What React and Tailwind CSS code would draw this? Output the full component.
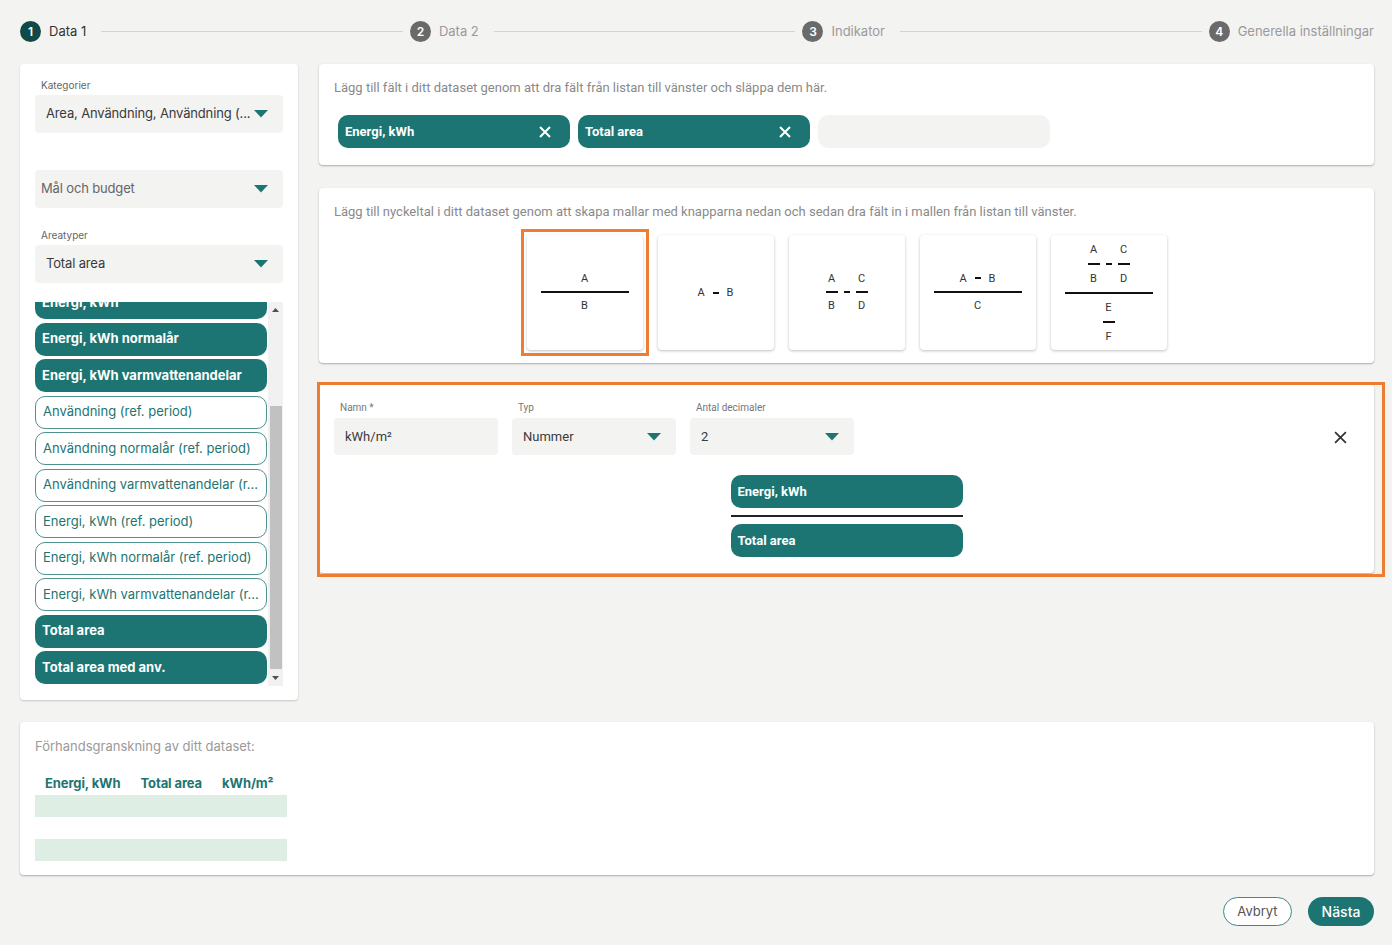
import React from 'react';

const TEAL = '#1c7572';

// Small filled caret used in the select boxes
function Caret() {
  return (
    <svg width="14" height="8" viewBox="0 0 14 8" className="shrink-0">
      <polygon points="0,0 14,0 7,7.5" fill={TEAL} />
    </svg>
  );
}

function Cross({ color = '#fff', size = 12, width = 2 }) {
  return (
    <svg width={size} height={size} viewBox="0 0 12 12" className="shrink-0">
      <path d="M1 1 L11 11 M11 1 L1 11" stroke={color} strokeWidth={width} strokeLinecap="butt" />
    </svg>
  );
}

function Step({ n, label, active }) {
  return (
    <div className="flex items-center gap-2 shrink-0">
      <div
        className={`w-[21px] h-[21px] rounded-full flex items-center justify-center text-white text-[12px] font-semibold ${
          active ? 'bg-[#0f4a47]' : 'bg-[#6a6a6a]'
        }`}
      >
        {n}
      </div>
      <span className={`text-[13px] ${active ? 'text-[#333]' : 'text-[#9a9a9a]'}`}>{label}</span>
    </div>
  );
}

function Select({ value, muted }) {
  return (
    <div
      className={`h-[38px] rounded-[4px] bg-[#f3f3f2] flex items-center justify-between gap-[4px] pr-[15px] ${
        muted ? 'pl-[6px]' : 'pl-[11px]'
      }`}
    >
      <span className={`text-[13px] tracking-[-0.15px] whitespace-nowrap overflow-hidden ${muted ? 'text-[#666]' : 'text-[#3a3a3a]'}`}>
        {value}
      </span>
      <Caret />
    </div>
  );
}

const FIELDS = [
  { label: 'Energi, kWh', filled: true },
  { label: 'Energi, kWh normalår', filled: true },
  { label: 'Energi, kWh varmvattenandelar', filled: true },
  { label: 'Användning (ref. period)' },
  { label: 'Användning normalår (ref. period)' },
  { label: 'Användning varmvattenandelar (r...' },
  { label: 'Energi, kWh (ref. period)' },
  { label: 'Energi, kWh normalår (ref. period)' },
  { label: 'Energi, kWh varmvattenandelar (r...' },
  { label: 'Total area', filled: true },
  { label: 'Total area med anv.', filled: true },
];

function FieldItem({ label, filled }) {
  return filled ? (
    <div className="h-[33px] shrink-0 rounded-[10px] bg-[#1c7572] text-white font-bold text-[13px] flex items-center px-[7px] whitespace-nowrap overflow-hidden">
      {label}
    </div>
  ) : (
    <div className="h-[33px] shrink-0 rounded-[10px] bg-white border-[1.5px] border-[#4f918e] text-[#1c7572] text-[13px] flex items-center px-[7px] whitespace-nowrap overflow-hidden">
      {label}
    </div>
  );
}

function Chip({ label, removable }) {
  return (
    <div className="w-[232px] h-[33px] rounded-[10px] bg-[#1c7572] flex items-center justify-between pl-[7px] pr-[19px] font-['Roboto',sans-serif] font-bold text-[13px] text-white">
      <span>{label}</span>
      {removable && <Cross size={12} width={2} />}
    </div>
  );
}

function Letter({ children }) {
  return <span className="text-[11px] leading-none text-[#333] w-[11px] text-center">{children}</span>;
}

function Bar({ w }) {
  return <div className="h-[2px] bg-[#111]" style={{ width: w }} />;
}

function Minus() {
  return <div className="w-[6px] h-[2px] bg-[#111]" />;
}

function SmallFrac({ top, bottom }) {
  return (
    <div className="flex flex-col items-center gap-[7px]">
      <Letter>{top}</Letter>
      <Bar w={12} />
      <Letter>{bottom}</Letter>
    </div>
  );
}

function TemplateCard({ children }) {
  return (
    <div className="w-[116px] h-[115px] bg-white rounded-[4px] shadow-[0_1px_3px_rgba(0,0,0,0.25)] flex items-center justify-center">
      {children}
    </div>
  );
}

function Label({ children }) {
  return <div className="text-[10px] text-[#777] mb-[5px] pl-[6px] leading-none">{children}</div>;
}

export default function App() {
  return (
    <div className="min-h-screen bg-[#f3f3f2] font-['Inter',sans-serif] pl-5 pr-[18px] pt-[21px] pb-5">
      {/* Stepper */}
      <div className="flex items-center h-[21px]">
        <Step n="1" label="Data 1" active />
        <div className="flex-1 h-px bg-[#d3d3d3] ml-[15px] mr-[7px]" />
        <Step n="2" label="Data 2" />
        <div className="flex-1 h-px bg-[#d3d3d3] ml-[15px] mr-[7px]" />
        <Step n="3" label="Indikator" />
        <div className="flex-1 h-px bg-[#d3d3d3] ml-[15px] mr-[7px]" />
        <Step n="4" label="Generella inställningar" />
      </div>

      <div className="flex gap-[21px] mt-[22px] items-start">
        {/* Left panel */}
        <div className="w-[278px] h-[636px] shrink-0 bg-white rounded-[4px] shadow-[0_1px_2px_rgba(0,0,0,0.18)] px-[15px] pt-[16px]">
          <div className="text-[10px] text-[#666] leading-none mb-[5px] pl-[6px]">Kategorier</div>
          <Select value="Area, Användning, Användning (..." />
          <div className="h-[37px]" />
          <Select value="Mål och budget" muted />
          <div className="text-[10px] text-[#666] leading-none mt-[22px] mb-[5px] pl-[6px]">Areatyper</div>
          <Select value="Total area" />

          <div className="flex mt-[19px] h-[384px]">
            <div className="w-[232px] h-full overflow-hidden">
              <div className="flex flex-col gap-[3.5px] -mt-[16px]">
                {FIELDS.map((f) => (
                  <FieldItem key={f.label} {...f} />
                ))}
              </div>
            </div>
            {/* scrollbar */}
            <div className="ml-[1px] w-[15px] h-full bg-[#f1f1f1] flex flex-col items-center">
              <div className="h-[17px] flex items-center justify-center">
                <svg width="7" height="4" viewBox="0 0 7 4"><polygon points="0,4 7,4 3.5,0" fill="#505050" /></svg>
              </div>
              <div className="mt-[87px] w-[12px] h-[264px] bg-[#c1c1c1]" />
              <div className="flex-1" />
              <div className="h-[17px] flex items-center justify-center">
                <svg width="7" height="4" viewBox="0 0 7 4"><polygon points="0,0 7,0 3.5,4" fill="#505050" /></svg>
              </div>
            </div>
          </div>
        </div>

        {/* Right column */}
        <div className="flex-1 flex flex-col font-['Roboto',sans-serif]">
          <div className="h-[101px] bg-white rounded-[4px] shadow-[0_1px_2px_rgba(0,0,0,0.3)] px-[15px] pt-[16px]">
            <div className="text-[13px] text-[#8a8a8a] leading-[16px]">
              Lägg till fält i ditt dataset genom att dra fält från listan till vänster och släppa dem här.
            </div>
            <div className="flex gap-2 mt-[19px] ml-[4px]">
              <Chip label="Energi, kWh" removable />
              <Chip label="Total area" removable />
              <div className="w-[232px] h-[33px] rounded-[10px] bg-[#f3f3f2]" />
            </div>
          </div>

          <div className="h-[175px] mt-[23px] bg-white rounded-[4px] shadow-[0_1px_2px_rgba(0,0,0,0.3)] px-[15px] pt-[16px]">
            <div className="text-[13px] text-[#8a8a8a] leading-[16px]">
              Lägg till nyckeltal i ditt dataset genom att skapa mallar med knapparna nedan och sedan dra fält in i mallen från listan till vänster.
            </div>
            <div className="flex justify-center gap-[15px] mt-[15px]">
              {/* selected template, framed */}
              <div className="-m-[6px] border-[3px] border-[#ed7d31] p-[3px]">
                <TemplateCard>
                  <div className="flex flex-col items-center gap-[7px] -mt-[2px]">
                    <Letter>A</Letter>
                    <Bar w={88} />
                    <Letter>B</Letter>
                  </div>
                </TemplateCard>
              </div>
              <TemplateCard>
                <div className="flex items-center gap-[6px]">
                  <Letter>A</Letter>
                  <Minus />
                  <Letter>B</Letter>
                </div>
              </TemplateCard>
              <TemplateCard>
                <div className="flex items-center gap-[6px] -mt-[2px]">
                  <SmallFrac top="A" bottom="B" />
                  <Minus />
                  <SmallFrac top="C" bottom="D" />
                </div>
              </TemplateCard>
              <TemplateCard>
                <div className="flex flex-col items-center gap-[7px] -mt-[2px]">
                  <div className="flex items-center gap-[6px]">
                    <Letter>A</Letter>
                    <Minus />
                    <Letter>B</Letter>
                  </div>
                  <Bar w={88} />
                  <Letter>C</Letter>
                </div>
              </TemplateCard>
              <TemplateCard>
                <div className="flex flex-col items-center gap-[8px]">
                  <div className="flex items-center gap-[6px]">
                    <div className="flex flex-col items-center gap-[8px]">
                      <Letter>A</Letter>
                      <Bar w={12} />
                      <Letter>B</Letter>
                    </div>
                    <Minus />
                    <div className="flex flex-col items-center gap-[8px]">
                      <Letter>C</Letter>
                      <Bar w={12} />
                      <Letter>D</Letter>
                    </div>
                  </div>
                  <Bar w={88} />
                  <div className="flex flex-col items-center gap-[8px]">
                    <Letter>E</Letter>
                    <Bar w={12} />
                    <Letter>F</Letter>
                  </div>
                </div>
              </TemplateCard>
            </div>
          </div>

          <div className="relative mt-[21px]">
            <div className="h-[189px] bg-white rounded-[4px] shadow-[0_1px_2px_rgba(0,0,0,0.3)] px-[15px] pt-[19px]">
              <div className="flex items-start">
                <div className="w-[164px]">
                  <Label>Namn *</Label>
                  <div className="h-[37px] rounded-[4px] bg-[#f3f3f2] flex items-center px-[11px] text-[13px] text-[#3a3a3a]">
                    kWh/m²
                  </div>
                </div>
                <div className="w-[164px] ml-[14px]">
                  <Label>Typ</Label>
                  <div className="h-[37px] rounded-[4px] bg-[#f3f3f2] flex items-center justify-between pl-[11px] pr-[15px] text-[13px] text-[#3a3a3a]">
                    <span>Nummer</span>
                    <Caret />
                  </div>
                </div>
                <div className="w-[164px] ml-[14px]">
                  <Label>Antal decimaler</Label>
                  <div className="h-[37px] rounded-[4px] bg-[#f3f3f2] flex items-center justify-between pl-[11px] pr-[15px] text-[13px] text-[#3a3a3a]">
                    <span>2</span>
                    <Caret />
                  </div>
                </div>
                <div className="flex-1" />
                <div className="mt-[28px] mr-[12px]">
                  <Cross color="#333" size={13} width={1.6} />
                </div>
              </div>
              <div className="flex flex-col items-center mt-[20px]">
                <Chip label="Energi, kWh" />
                <div className="w-[232px] h-[2px] bg-[#222] my-[7px]" />
                <Chip label="Total area" />
              </div>
            </div>
            {/* highlight frame */}
            <div className="absolute -left-[2px] -top-[2px] -right-[11px] -bottom-[4px] border-[3px] border-[#ed7d31] pointer-events-none" />
          </div>
        </div>
      </div>

      {/* Preview */}
      <div className="mt-[22px] h-[153px] bg-white rounded-[4px] shadow-[0_1px_2px_rgba(0,0,0,0.3)] px-[15px] pt-[16px]">
        <div className="text-[13px] text-[#9a9a9a] leading-[16px]">Förhandsgranskning av ditt dataset:</div>
        <div className="w-[252px] mt-[19px] text-[13px] font-bold text-[#1c7572]">
          <div className="h-[22px] flex items-center pl-[10px] gap-[20px] tracking-[-0.1px]">
            <span>Energi, kWh</span>
            <span>Total area</span>
            <span>kWh/m²</span>
          </div>
          <div className="h-[22px] bg-[#dfeee5]" />
          <div className="h-[22px]" />
          <div className="h-[22px] bg-[#dfeee5]" />
        </div>
      </div>

      {/* Footer buttons */}
      <div className="flex justify-end gap-[16px] mt-[22px]">
        <button className="h-[29px] w-[69px] rounded-full border border-[#3f8985] bg-white text-[13px] text-[#555]">
          Avbryt
        </button>
        <button className="h-[29px] w-[66px] rounded-full bg-[#1c7572] text-[14px] font-medium text-white">
          Nästa
        </button>
      </div>
    </div>
  );
}
